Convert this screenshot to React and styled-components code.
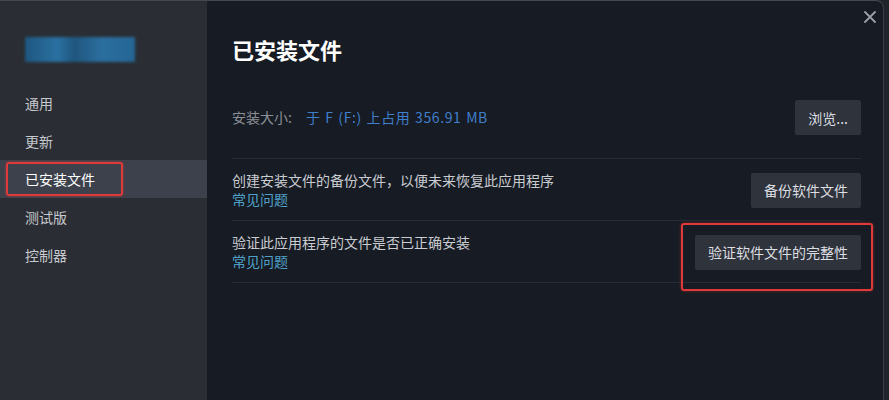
import React from "react";
import styled, { createGlobalStyle } from "styled-components";

const GlobalStyle = createGlobalStyle`
  html, body {
    margin: 0;
    padding: 0;
    background: #20242b;
  }
  body {
    font-family: "Noto Sans CJK SC", "Noto Sans", "Liberation Sans", sans-serif;
  }
`;

const Window = styled.div`
  width: 884px;
  height: 400px;
  display: flex;
  box-sizing: border-box;
  border-top: 1px solid #45484e;
  border-right: 1px solid #3a3e46;
  border-top-right-radius: 8px;
  overflow: hidden;
  background: #171b23;
`;

const Sidebar = styled.aside`
  width: 207px;
  flex-shrink: 0;
  background: #2a2d33;
  display: flex;
  flex-direction: column;
  padding-top: 36px;
  box-sizing: border-box;
`;

const Logo = styled.div`
  width: 110px;
  height: 25px;
  margin-left: 25px;
  margin-bottom: 22px;
  background: linear-gradient(90deg, #1d5f8f 0%, #2a7db5 30%, #1e5d8c 45%, #2b7bb2 70%, #2470a6 100%);
  filter: blur(1.5px);
  opacity: 0.85;
`;

const NavItem = styled.div`
  position: relative;
  height: 38px;
  display: flex;
  align-items: center;
  padding-left: 25px;
  font-size: 14px;
  color: ${(p) => (p.$active ? "#ffffff" : "#c6c9ce")};
  background: ${(p) => (p.$active ? "#3d414c" : "transparent")};
`;

const Highlight = styled.span`
  position: absolute;
  border: 2px solid #e0393a;
  border-radius: 3px;
  box-shadow: 0 0 3px rgba(224, 57, 58, 0.5);
  pointer-events: none;
`;

const SideHighlight = styled(Highlight)`
  left: 6px;
  top: 2px;
  width: 113px;
  height: 30px;
`;

const Main = styled.main`
  position: relative;
  flex: 1;
  padding: 32px 22px 0 25px;
  box-sizing: border-box;
`;

const Close = styled.div`
  position: absolute;
  top: 8px;
  right: 5px;
  width: 16px;
  height: 16px;
  display: flex;
  align-items: center;
  justify-content: center;
`;

const Title = styled.h1`
  margin: 0 0 35px;
  font-size: 22px;
  line-height: 32px;
  font-weight: 700;
  color: #ffffff;
`;

const Row = styled.div`
  display: flex;
  align-items: center;
  justify-content: space-between;
  border-bottom: 1px solid #262b34;
  padding: ${(p) => (p.$first ? "0 0 23px" : "12px 0 11px")};
`;

const Text = styled.div`
  display: flex;
  flex-direction: column;
  font-size: 14px;
  line-height: 19px;
  color: #c9ccd1;
`;

const Label = styled.span`
  color: #8a8f97;
  margin-right: 14px;
`;

const Value = styled.span`
  color: #3f7fcb;
  letter-spacing: 0.6px;
  word-spacing: 1px;
`;

const Link = styled.span`
  color: #4fa0c8;
`;

const ButtonWrap = styled.div`
  position: relative;
  display: flex;
`;

const Button = styled.button`
  display: block;
  height: 35px;
  padding: 0 13px;
  border: none;
  border-radius: 2px;
  background: #2f333b;
  color: #dcdee1;
  font-family: inherit;
  font-size: 14px;
`;

const ButtonHighlight = styled(Highlight)`
  left: -14px;
  top: -12px;
  right: -12px;
  bottom: -21px;
`;

const navItems = ["通用", "更新", "已安装文件", "测试版", "控制器"];

export default function App() {
  return (
    <>
      <GlobalStyle />
      <Window>
        <Sidebar>
          <Logo />
          {navItems.map((item) => (
            <NavItem key={item} $active={item === "已安装文件"}>
              {item === "已安装文件" && <SideHighlight />}
              {item}
            </NavItem>
          ))}
        </Sidebar>
        <Main>
          <Close>
            <svg width="12" height="12" viewBox="0 0 12 12">
              <path d="M1 1L11 11M11 1L1 11" stroke="#9a9ea6" strokeWidth="1.8" strokeLinecap="round" />
            </svg>
          </Close>
          <Title>已安装文件</Title>
          <Row $first>
            <Text>
              <div>
                <Label>安装大小:</Label>
                <Value>于 F (F:) 上占用 356.91 MB</Value>
              </div>
            </Text>
            <ButtonWrap>
              <Button>浏览...</Button>
            </ButtonWrap>
          </Row>
          <Row>
            <Text>
              <span>创建安装文件的备份文件，以便未来恢复此应用程序</span>
              <Link>常见问题</Link>
            </Text>
            <ButtonWrap>
              <Button>备份软件文件</Button>
            </ButtonWrap>
          </Row>
          <Row>
            <Text>
              <span>验证此应用程序的文件是否已正确安装</span>
              <Link>常见问题</Link>
            </Text>
            <ButtonWrap>
              <Button>验证软件文件的完整性</Button>
              <ButtonHighlight />
            </ButtonWrap>
          </Row>
        </Main>
      </Window>
    </>
  );
}
